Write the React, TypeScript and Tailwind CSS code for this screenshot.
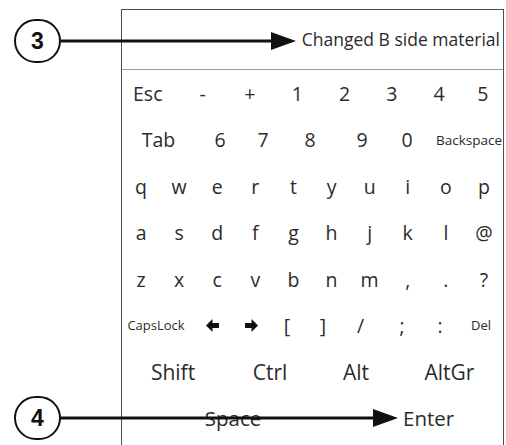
const numRow = ['-', '+', '1', '2', '3', '4', '5']
const tabRow = ['6', '7', '8', '9', '0']
const qRow = ['q', 'w', 'e', 'r', 't', 'y', 'u', 'i', 'o', 'p']
const aRow = ['a', 's', 'd', 'f', 'g', 'h', 'j', 'k', 'l', '@']
const zRow = ['z', 'x', 'c', 'v', 'b', 'n', 'm', ',', '.', '?']

function ArrowLeft() {
  return (
    <svg width="14" height="13" viewBox="0 0 14 13">
      <path d="M0 6.5 L6.5 0 L6.5 4 L13 4 L13 9 L6.5 9 L6.5 13 Z" fill="#111" />
    </svg>
  )
}

function ArrowRight() {
  return (
    <svg width="14" height="13" viewBox="0 0 14 13">
      <path d="M14 6.5 L7.5 0 L7.5 4 L1 4 L1 9 L7.5 9 L7.5 13 Z" fill="#111" />
    </svg>
  )
}

function Callout({ n, top }: { n: string; top: string }) {
  return (
    <div
      className={`absolute left-[14px] ${top} w-[47px] h-[44px] rounded-full border-2 border-[#111] bg-white flex items-center justify-center font-['Liberation_Sans',Arial,sans-serif] font-bold text-[23px] text-[#111]`}
    >
      {n}
    </div>
  )
}

export default function App() {
  const row = 'h-[46.5px] items-center'
  return (
    <div className="relative w-[506px] h-[445px] overflow-hidden bg-white font-['Open_Sans',sans-serif] text-[#2b2b2b]">
      <div className="ml-[121px] mt-[9px] w-[383px] h-[436px] border-x border-t border-[#4d4d4d]">
        <div className="h-[60px] border-b border-[#9a9a9a] flex items-center justify-end pr-[3px] text-[17.5px] text-[#2a2a2a]">
          Changed B side material
        </div>

        <div className={`grid grid-cols-[57px_repeat(6,47.3px)_1fr] text-[19.5px] ${row}`}>
          <span className="pl-[11px]">Esc</span>
          {numRow.map((k) => (
            <span key={k} className="text-center">{k}</span>
          ))}
        </div>

        <div className={`grid grid-cols-[73px_50px_36px_58px_46px_44px_1fr] text-[19.5px] ${row}`}>
          <span className="text-center">Tab</span>
          {tabRow.map((k) => (
            <span key={k} className="text-center">{k}</span>
          ))}
          <span className="text-[13.5px] text-right pr-[1px]">Backspace</span>
        </div>

        {[qRow, aRow, zRow].map((r, i) => (
          <div key={i} className={`grid grid-cols-10 text-[19.5px] ${row}`}>
            {r.map((k) => (
              <span key={k} className="text-center">{k}</span>
            ))}
          </div>
        ))}

        <div className={`grid grid-cols-[68px_46px_30px_42px_30px_45px_38px_38px_1fr] text-[19.5px] ${row}`}>
          <span className="text-[13px] text-center">CapsLock</span>
          <span className="flex justify-center"><ArrowLeft /></span>
          <span className="flex justify-center"><ArrowRight /></span>
          <span className="text-center">[</span>
          <span className="text-center">]</span>
          <span className="text-center">/</span>
          <span className="text-center">;</span>
          <span className="text-center">:</span>
          <span className="text-[13px] text-center">Del</span>
        </div>

        <div className={`grid grid-cols-[102px_92px_80px_1fr] text-[21px] ${row}`}>
          {['Shift', 'Ctrl', 'Alt', 'AltGr'].map((k) => (
            <span key={k} className="text-center">{k}</span>
          ))}
        </div>

        <div className={`grid grid-cols-[222px_1fr] text-[20.5px] ${row}`}>
          <span className="text-center">Space</span>
          <span className="pl-[59px]">Enter</span>
        </div>
      </div>

      <svg className="absolute left-0 top-0 pointer-events-none" width="506" height="445">
        <line x1="60" y1="41" x2="276" y2="41" stroke="#111" strokeWidth="3" />
        <polygon points="271,32 296,41 271,50" fill="#111" />
        <line x1="60" y1="418" x2="378" y2="418" stroke="#111" strokeWidth="3" />
        <polygon points="373,409 398,418 373,427" fill="#111" />
      </svg>

      <Callout n="3" top="top-[19px]" />
      <Callout n="4" top="top-[396px]" />
    </div>
  )
}
